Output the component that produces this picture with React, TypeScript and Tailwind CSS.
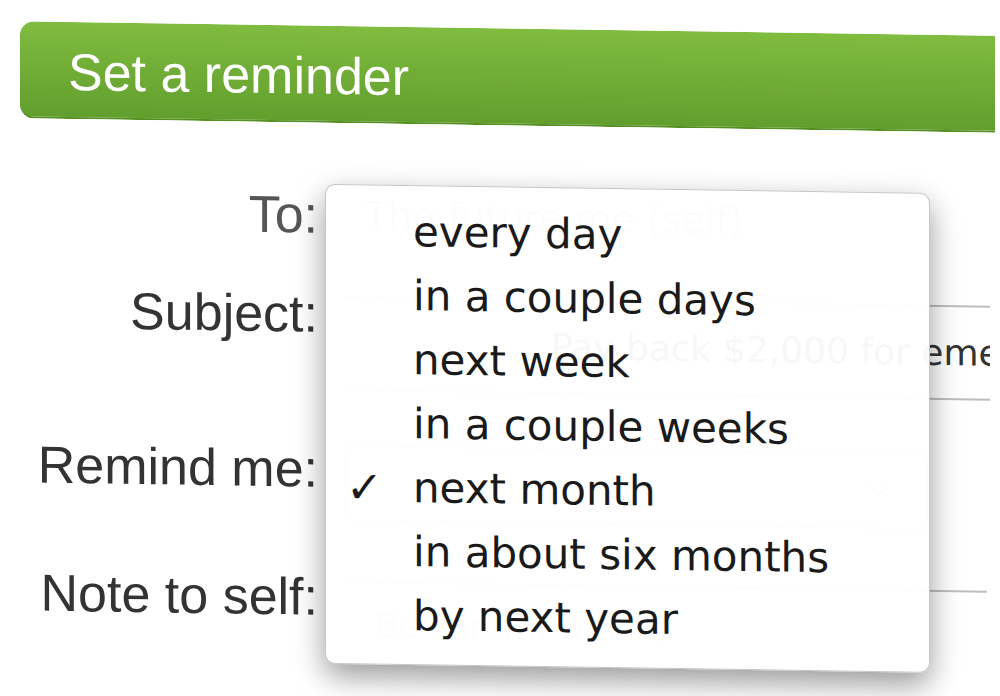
import React from "react";

const items = [
  "every day",
  "in a couple days",
  "next week",
  "in a couple weeks",
  "next month",
  "in about six months",
  "by next year",
];

function Label({ children, light }: { children: React.ReactNode; light?: boolean }) {
  return (
    <div
      className={`w-[320px] shrink-0 pr-[2px] text-right text-[52px] leading-[60px] font-['Liberation_Sans',Arial,sans-serif] ${
        light ? "text-[#555555]" : "text-[#333333]"
      }`}
    >
      {children}
    </div>
  );
}

export default function App() {
  return (
    <div className="relative w-[1000px] h-[696px] overflow-hidden bg-white">
      <div className="relative h-full origin-top-left skew-y-[0.85deg]">
        {/* Header bar */}
        <div className="pt-[21px] pl-[20px]">
          <div className="flex h-[97px] w-[975px] items-center rounded-l-[14px] border-b-2 border-[#558f22] bg-linear-to-b from-[#7fbc3f] to-[#629e2d] pl-[48px] pt-[5px]">
            <span className="text-[52px] leading-none text-white font-['Liberation_Sans',Arial,sans-serif]">
              Set a reminder
            </span>
          </div>
        </div>

        {/* Form */}
        <div className="mt-[62px] flex flex-col">
          {/* To */}
          <div className="flex h-[99px]">
            <Label light>To:</Label>
            <div className="ml-[45px] h-[60px] text-[38px] leading-[60px] text-[#b0b0b0] font-['DejaVu_Sans',sans-serif]">
              The future me (self)
            </div>
          </div>

          {/* Subject */}
          <div className="flex h-[155px]">
            <Label>Subject:</Label>
            <div className="ml-[25px] mt-[12px] flex h-[95px] w-[645px] items-center border-y-2 border-[#bdbdbd] pl-[206px] text-[36px] whitespace-nowrap overflow-hidden text-[#333] font-['DejaVu_Sans',sans-serif]">
              Pay back $2,000 for emergency
            </div>
          </div>

          {/* Remind me */}
          <div className="flex h-[128px]">
            <Label>Remind me:</Label>
            <div className="ml-[25px] mt-[6px] flex h-[76px] w-[583px] items-center justify-end rounded-[8px] border-2 border-[#b7c8df] bg-linear-to-b from-[#fbfcfe] to-[#eef2f8] pr-[36px]">
              <svg width="22" height="14" viewBox="0 0 22 14" fill="none">
                <path d="M2 2l9 9 9-9" stroke="#9aa3ad" strokeWidth="3" />
              </svg>
            </div>
          </div>

          {/* Note to self */}
          <div className="flex h-[200px]">
            <Label>Note to self:</Label>
            <div className="ml-[25px] mt-[14px] h-[200px] w-[642px] border-t-2 border-[#bdbdbd] pl-[30px] pt-[16px] text-[34px] text-[#b5b5b5] font-['DejaVu_Sans',sans-serif]">
              Be careful with it
            </div>
          </div>
        </div>

        {/* Dropdown menu */}
        <div className="absolute left-[325px] top-[179px] h-[480px] w-[605px] rounded-[10px] border border-[#c6c6c6] bg-white/[0.965] pt-[14px] shadow-[0_12px_30px_rgba(0,0,0,0.4)]">
          {items.map((t, i) => (
            <div
              key={t}
              className="relative h-[64px] whitespace-nowrap pl-[87px] text-[42px] leading-[64px] text-[#1a1a1a] font-['DejaVu_Sans',sans-serif]"
            >
              {i === 4 && (
                <span className="absolute left-[20px] top-0 text-[44px] leading-[64px] text-[#1a1a1a]">
                  ✓
                </span>
              )}
              {t}
            </div>
          ))}
        </div>
      </div>
    </div>
  );
}
